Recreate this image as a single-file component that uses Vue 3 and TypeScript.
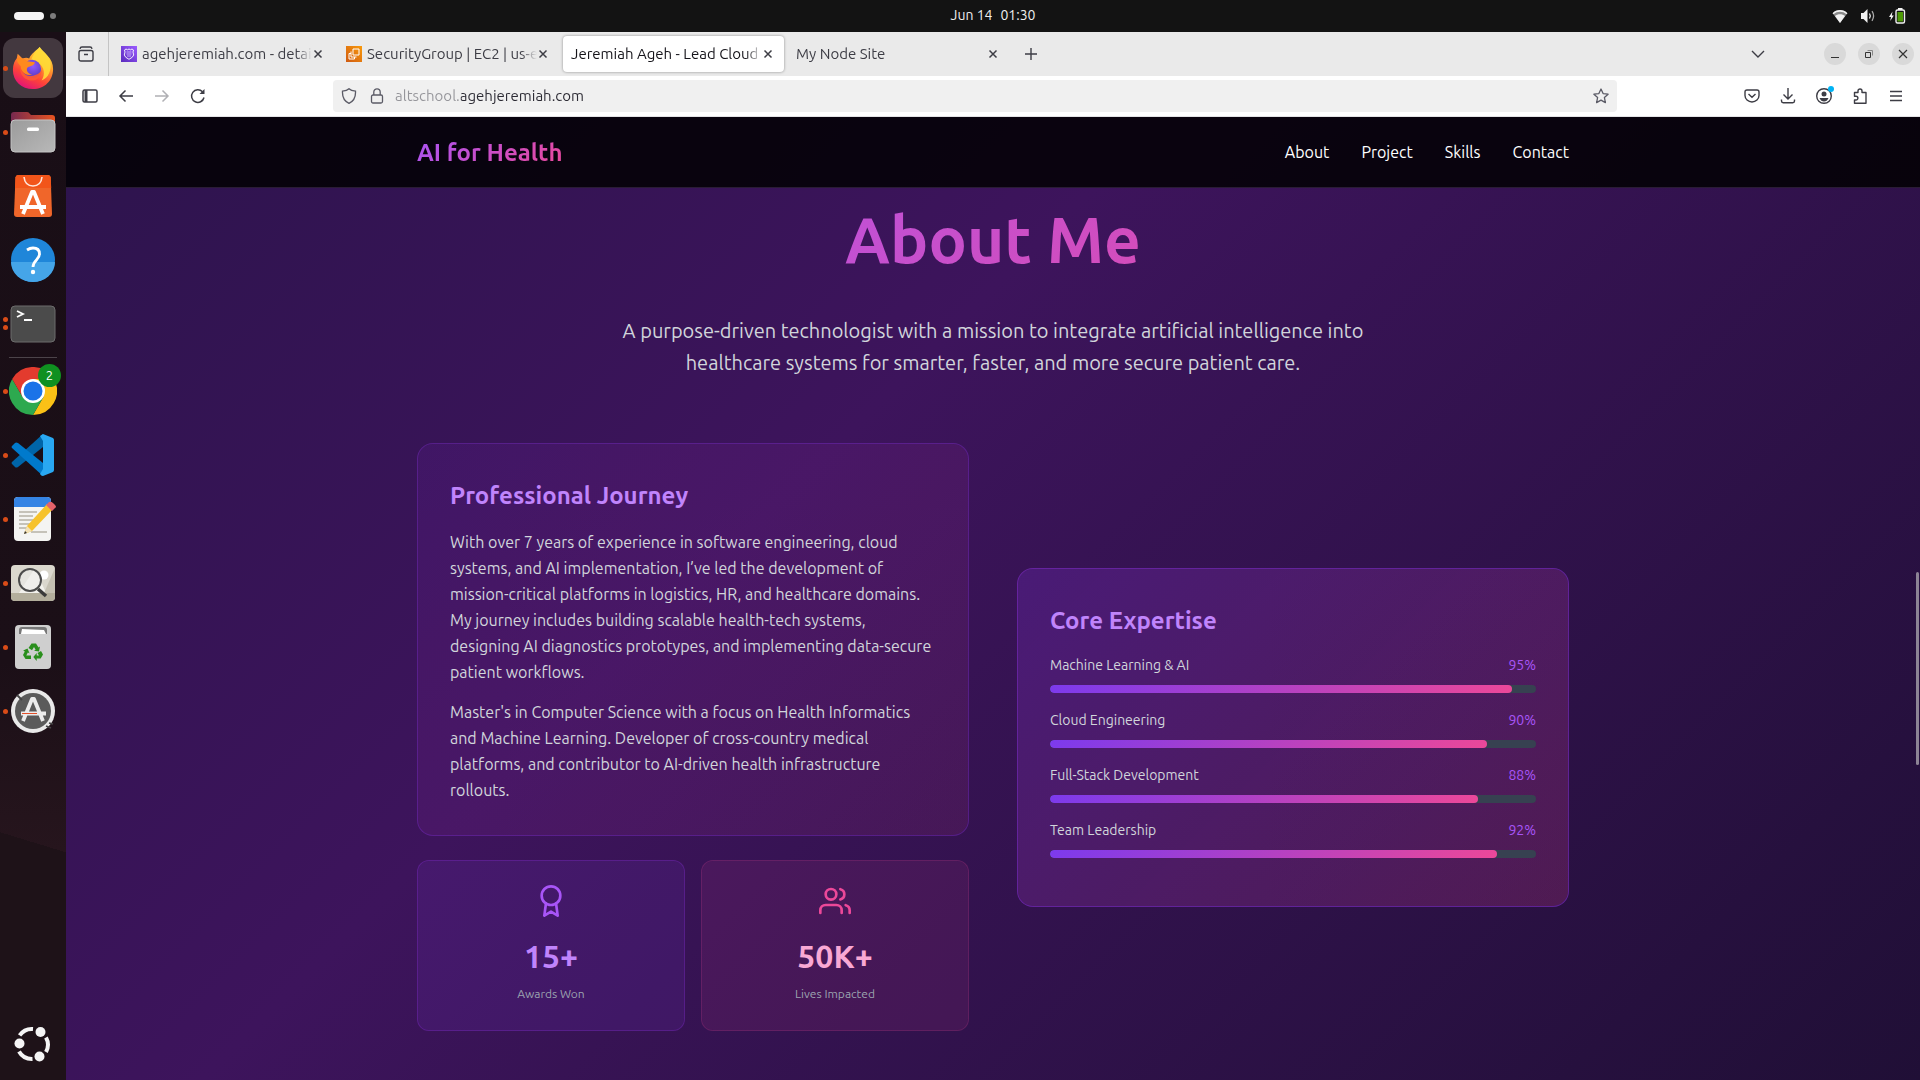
<script setup lang="ts">
interface Tab {
  title: string
  icon?: 'route' | 'ec2'
  active?: boolean
}

interface Skill {
  name: string
  level: number
}

const tabs: Tab[] = [
  { title: 'agehjeremiah.com - detail', icon: 'route' },
  { title: 'SecurityGroup | EC2 | us-e', icon: 'ec2' },
  { title: 'Jeremiah Ageh - Lead Cloud E', active: true },
  { title: 'My Node Site' },
]

const links: string[] = ['About', 'Project', 'Skills', 'Contact']

const skills: Skill[] = [
  { name: 'Machine Learning & AI', level: 95 },
  { name: 'Cloud Engineering', level: 90 },
  { name: 'Full-Stack Development', level: 88 },
  { name: 'Team Leadership', level: 92 },
]
</script>

<template>
  <div class="desktop">
    <header class="topbar">
      <div class="workspaces"><span class="pill"></span><span class="dot"></span></div>
      <time class="clock"><span>Jun 14</span><span>01:30</span></time>
      <div class="tray">
        <svg width="16" height="16" viewBox="0 0 16 16">
          <path d="M8 15 0.6 5.2C4.5 1 11.500 1 15.400 5.200Z" fill="#8a8a8a" />
          <path d="M0.600 5.200C4.500 1 11.500 1 15.400 5.200L14.500 6.300C11 3 5 3 1.500 6.300Z" fill="#f2f2f2" />
          <path d="M8 15 3 8C5.500 5.800 10.500 5.800 13 8Z" fill="#f2f2f2" />
        </svg>
        <svg width="16" height="16" viewBox="0 0 16 16">
          <path d="M1 5h2.500L7.500 1v14L3.500 11H1Z" fill="#f2f2f2" />
          <path d="M9.500 5.500q1.600 2.500 0 5" stroke="#f2f2f2" stroke-width="1.300" fill="none" />
          <path d="M12 3.200q3.200 4.800 0 9.600" stroke="#aaa" stroke-width="1.300" fill="none" />
        </svg>
        <svg width="18" height="16" viewBox="0 0 18 16">
          <path d="M4.500 3.500 1 9h2l-.8 4L5.800 7.500h-2Z" fill="#f2f2f2" />
          <rect x="8" y="2" width="8.500" height="13" rx="1.500" fill="none" stroke="#f2f2f2" stroke-width="1.400" />
          <rect x="10" y="0" width="4.500" height="2" fill="#f2f2f2" />
          <rect x="9.500" y="4" width="5.500" height="9.500" fill="#4e9a06" />
        </svg>
      </div>
    </header>

    <div class="workarea">
      <aside class="dock">
        <div class="app focused">
          <i class="runs"></i>
          <svg width="46" height="46" viewBox="0 0 46 46">
            <defs>
              <linearGradient id="fox" x1="0.800" y1="0" x2="0.300" y2="1">
                <stop offset="0" stop-color="#fff44f" />
                <stop offset="0.350" stop-color="#ffa52c" />
                <stop offset="0.700" stop-color="#ff4338" />
                <stop offset="1" stop-color="#e0127a" />
              </linearGradient>
              <radialGradient id="globe" cx="0.550" cy="0.350" r="0.600">
                <stop offset="0" stop-color="#9059ff" />
                <stop offset="1" stop-color="#5b3cc4" />
              </radialGradient>
            </defs>
            <path d="M30 1c2 3 5 5 8 9 4 4 6 9 6 14 0 12-9 21-21 21S2 37 2 25c0-6 2-10 4-12l1-5 5 5c3-1 5-1 7 0 2-5 7-8 11-12Z" fill="url(#fox)" />
            <path d="M30 1c1 5 9 7 11 15 2 9-2 18-9 20 4-6 3-14-3-18-4-2-6-2-8-2 1-7 6-11 9-15Z" fill="#ffdb37" opacity="0.900" />
            <circle cx="22" cy="24" r="9.500" fill="url(#globe)" />
            <path d="M6 13c4-1 8 0 11 3l8 1c-1 4-5 4-7 5-3 2-1 7 4 8-7 2-12-4-12-9-2-2-4-5-4-8Z" fill="#ff8a1e" />
            <path d="M10 21c0 8 8 13 16 9 3-1 5-3 6-5 1 6-5 12-12 11S8 28 10 21Z" fill="#ff5a33" opacity="0.900" />
          </svg>
        </div>
        <div class="app">
          <i class="runs"></i>
          <svg width="46" height="46" viewBox="0 0 46 46">
            <defs>
              <linearGradient id="folder" x1="0" x2="1"><stop offset="0" stop-color="#77294f" /><stop offset="1" stop-color="#e95420" /></linearGradient>
              <linearGradient id="folderFront" x1="0" x2="1" y1="0" y2="1"><stop offset="0" stop-color="#9b9b9b" /><stop offset="1" stop-color="#b8b8b8" /></linearGradient>
            </defs>
            <path d="M1 6q0-3 3-3h13q2 0 3 2l1 1h21q3 0 3 3v12H1Z" fill="url(#folder)" />
            <rect x="1" y="11" width="44" height="32" rx="4" fill="url(#folderFront)" stroke="#c4c4c4" />
            <rect x="17" y="18.500" width="12" height="3.500" rx="1.500" fill="#fff" />
          </svg>
        </div>
        <div class="app">
          <svg width="46" height="46" viewBox="0 0 46 46">
            <path d="M8 2h30q2.500 0 2.700 2.500L42 41q0 3-3 3H7q-3 0-3-3L5.500 4.500Q5.700 2 8 2Z" fill="#f0662a" />
            <path d="M8 2h30q2.500 0 2.700 2.500L41.200 15H5L5.500 4.500Q5.700 2 8 2Z" fill="#f2551a" />
            <path d="M14 4q1 9 9 9t9-9" fill="none" stroke="#fde5da" stroke-width="1.600" />
            <path d="M13 41 22 19h2l9 22M10 34h26" fill="none" stroke="#fff" stroke-width="3.800" stroke-linejoin="round" />
          </svg>
        </div>
        <div class="app">
          <svg width="46" height="46" viewBox="0 0 46 46">
            <circle cx="23" cy="23" r="22" fill="#1f86d9" />
            <path d="M1 25a22 20 0 0 0 44 0Z" fill="#45a5e8" />
            <path d="M17 13q3-2 6-2 6.500 0 6.500 6c0 6-6.500 6-6.500 13" fill="none" stroke="#fff" stroke-width="2.800" />
            <circle cx="23" cy="35" r="2.200" fill="#fff" />
          </svg>
        </div>
        <div class="app">
          <i class="runs double"></i>
          <svg width="46" height="46" viewBox="0 0 46 46">
            <rect x="1" y="5" width="44" height="36" rx="4" fill="#4b4b4b" stroke="#6c6c6c" />
            <path d="m7 10 6 3-6 3M14 19h8" fill="none" stroke="#fff" stroke-width="1.800" />
          </svg>
        </div>
        <hr class="split" />
        <div class="app">
          <i class="runs"></i>
          <svg width="48" height="48" viewBox="0 0 48 48">
            <path d="M24 12h20.800A24 24 0 0 1 24 48l10.400-18Z" fill="#fbc116" />
            <path d="M3.200 12A24 24 0 0 0 24 48l10.400-18H13.600Z" fill="#2da94f" />
            <path d="M3.200 12A24 24 0 0 1 44.800 12H24L13.600 30Z" fill="#e33b2e" />
            <circle cx="24" cy="24" r="12" fill="#fff" />
            <circle cx="24" cy="24" r="9.500" fill="#1a73e8" />
          </svg>
          <span class="badge">2</span>
        </div>
        <div class="app">
          <i class="runs"></i>
          <svg width="46" height="46" viewBox="0 0 46 46">
            <path d="M33 2 2 30q-1 1 0 2l3 3q1 1 3 0L33 15Z" fill="#0065a9" />
            <path d="M33 44 2 16q-1-1 0-2l3-3q1-1 3 0l25 20Z" fill="#007acc" />
            <path d="M33 2 43 6q1 1 1 2v30q0 1-1 2l-10 4q-2 0-3-2l3-5V9l-3-5Z" fill="#29a8f2" />
          </svg>
        </div>
        <div class="app">
          <i class="runs"></i>
          <svg width="50" height="46" viewBox="0 0 50 46">
            <rect x="6" y="1" width="37" height="44" rx="4" fill="#f4f4f2" />
            <path d="M6 11V5q0-4 4-4h29q4 0 4 4v6Z" fill="#3584e4" />
            <path d="M11 16h18M11 20h14M11 24h18M11 28h14M11 32h10M23 36h16" stroke="#b5b1a6" stroke-width="1.600" />
            <path d="m16 38 3-8L39 8l6 5-21 22Z" fill="#f6c22c" />
            <path d="m16 38 3-8 5 5Z" fill="#f3e2b8" />
            <path d="m38 9 3-3q2-1 4 1l2 2q2 2 0 3l-3 3Z" fill="#e4626b" />
            <path d="m16 38 1-3 2 2Z" fill="#333" />
          </svg>
        </div>
        <div class="app">
          <i class="runs"></i>
          <svg width="46" height="46" viewBox="0 0 46 46">
            <rect x="1" y="5" width="44" height="36" rx="4" fill="#dad7cd" />
            <path d="M9 33 25 8l11 25Z" fill="#f2f1ec" />
            <path d="M34 33 45 8v25Z" fill="#c4c0b2" />
            <path d="M1 33h44v4q0 4-4 4H5q-4 0-4-4Z" fill="#b3ae9c" />
            <circle cx="34" cy="15" r="4.500" fill="#fff" />
            <circle cx="20" cy="20" r="11" fill="#efefec" fill-opacity="0.600" stroke="#4c4c4c" stroke-width="2" />
            <path d="m28 29 8 7" stroke="#3a3a3a" stroke-width="3.500" />
          </svg>
        </div>
        <div class="app">
          <i class="runs"></i>
          <svg width="46" height="46" viewBox="0 0 46 46">
            <rect x="5" y="1" width="36" height="44" rx="4" fill="#cfcfcf" />
            <path d="M9 10V6q0-3 3-3h22q3 0 3 3v4Z" fill="#777" />
            <path d="m11 10 1-5 22 1 2 4Z" fill="#fff" />
            <g fill="#2a8f1d">
              <path d="m18.500 24 3-4.500h4.500l2.500 4 1.500-.9-1 5-5-.9 1.600-1-1.600-2.600-2 3.200Z" />
              <path d="m31 27 2 3.500-2.300 4h-4V37l-3.400-4 3.400-4v2.500H29l-1.500-2.600Z" />
              <path d="m17.500 24.500 2 4.700-1.700-.7-1.500 3H21v3.500h-5.500l-2.500-4 1.800-3.500-1.600-1Z" />
            </g>
          </svg>
        </div>
        <div class="app">
          <i class="runs"></i>
          <svg width="46" height="46" viewBox="0 0 46 46">
            <circle cx="23" cy="23" r="22" fill="#e9e9e9" />
            <circle cx="23" cy="23" r="18" fill="#5b5b5b" />
            <path d="m7 7 5 5M36 38l5 2M39 35l4 1" stroke="#444" stroke-width="1.800" />
            <path d="m13 33 9-22h2l9 22M11 25.500h25" fill="none" stroke="#ececec" stroke-width="3.800" stroke-linejoin="round" />
            <path d="M12 25.500h15" stroke="#e2502a" stroke-width="1" />
          </svg>
        </div>
        <button class="launcher" aria-label="Show apps">
          <svg width="38" height="38" viewBox="1 0 38 38">
            <g fill="none" stroke="#f5f5f5" stroke-width="4">
              <path d="M6.600 10.400A15 15 0 0 1 20 4" />
              <path d="M33 12.500a15 15 0 0 1 0 14.500" />
              <path d="M6 26.500A15 15 0 0 0 19.500 34" />
            </g>
            <g fill="#f5f5f5"><circle cx="6.500" cy="18.500" r="5" /><circle cx="27.500" cy="7" r="5" /><circle cx="26.500" cy="31.500" r="5" /></g>
          </svg>
        </button>
      </aside>

      <div class="browser">
        <div class="tabbar">
          <button class="tool recent" aria-label="Recent browsing">
            <svg width="16" height="16" viewBox="0 0 16 16" fill="none" stroke="#3d3d45" stroke-width="1.400">
              <rect x="1" y="4.500" width="14" height="10.500" rx="2" /><path d="M2 2.800q.3-1.800 2-1.800h8q1.700 0 2 1.800M6 8.500h4" />
            </svg>
          </button>
          <div class="tabs">
            <div v-for="tab in tabs" :key="tab.title" class="tab" :class="{ active: tab.active }">
              <svg v-if="tab.icon === 'route'" width="16" height="16" viewBox="0 0 16 16">
                <defs>
                  <linearGradient id="routeBg" x1="0" y1="1" x2="1" y2="0"><stop offset="0" stop-color="#5a2bbd" /><stop offset="1" stop-color="#9b5bff" /></linearGradient>
                </defs>
                <rect width="16" height="16" fill="url(#routeBg)" />
                <path d="M3.500 4 5 3l1.500.8L8 3l1.500.8L11 3l1.500 1-.5 2 .7 3q-.7 2.500-4.700 4.300Q4 11.500 3.300 9L4 6Z" fill="none" stroke="#fff" stroke-width="0.900" />
                <path d="M5.500 6h5M5.500 8h5M6 10h4" stroke="#d9c4ff" stroke-width="0.800" />
              </svg>
              <svg v-if="tab.icon === 'ec2'" width="16" height="16" viewBox="0 0 16 16">
                <defs>
                  <linearGradient id="ec2Bg" x1="0" y1="1" x2="1" y2="0"><stop offset="0" stop-color="#cf5a12" /><stop offset="1" stop-color="#f99a0c" /></linearGradient>
                </defs>
                <rect width="16" height="16" fill="url(#ec2Bg)" />
                <path d="M7 3h6v6H7ZM5 5.500v5.500h5.500M5 7.500H3V13h5.500v-2" fill="none" stroke="#fff" stroke-width="1" />
              </svg>
              <span class="title">{{ tab.title }}</span>
              <button class="close" aria-label="Close tab">
                <svg width="10" height="10" viewBox="0 0 10 10"><path d="m1.500 1.500 7 7m0-7-7 7" stroke="#3d3d45" stroke-width="1.500" /></svg>
              </button>
            </div>
            <button class="tool plus" aria-label="New tab">
              <svg width="14" height="14" viewBox="0 0 14 14"><path d="M7 1v12M1 7h12" stroke="#3d3d45" stroke-width="1.400" /></svg>
            </button>
          </div>
          <button class="tool chevron" aria-label="List all tabs">
            <svg width="14" height="14" viewBox="0 0 14 14"><path d="m1 4 6 6 6-6" fill="none" stroke="#3d3d45" stroke-width="1.400" /></svg>
          </button>
          <div class="window-buttons">
            <button aria-label="Minimize"><svg width="10" height="10" viewBox="0 0 10 10"><path d="M1 8.500h8" stroke="#333" /></svg></button>
            <button aria-label="Restore"><svg width="10" height="10" viewBox="0 0 10 10" fill="none"><path d="M1.500 3.500h5v5h-5Z" stroke="#333" /><path d="M3.500 1.500h5v5" stroke="#888" /></svg></button>
            <button aria-label="Close"><svg width="10" height="10" viewBox="0 0 10 10"><path d="m1 1 8 8m0-8-8 8" stroke="#333" stroke-width="1.200" /></svg></button>
          </div>
        </div>

        <div class="navbar">
          <div class="nav-left">
            <button class="tool" aria-label="Sidebar">
              <svg width="16" height="16" viewBox="0 0 16 16" fill="none" stroke="#3d3d45" stroke-width="1.500"><rect x="1" y="2" width="14" height="12" rx="1.500" /><path d="M4 2v12" stroke-width="3" /></svg>
            </button>
            <button class="tool" aria-label="Back">
              <svg width="16" height="16" viewBox="0 0 16 16" fill="none" stroke="#3d3d45" stroke-width="1.500"><path d="M15 8H2M7.500 2.500 2 8l5.500 5.500" /></svg>
            </button>
            <button class="tool" aria-label="Forward" disabled>
              <svg width="16" height="16" viewBox="0 0 16 16" fill="none" stroke="#b0b0b4" stroke-width="1.500"><path d="M1 8h13M8.500 2.500 14 8l-5.500 5.500" /></svg>
            </button>
            <button class="tool" aria-label="Reload">
              <svg width="16" height="16" viewBox="0 0 16 16" fill="none" stroke="#3d3d45" stroke-width="1.500"><path d="M14 9.500A6.300 6.300 0 1 1 12.500 3.800" /><path d="M14.500 1v5H9.500Z" fill="#3d3d45" stroke="none" /></svg>
            </button>
          </div>
          <div class="urlbar">
            <svg width="16" height="16" viewBox="0 0 16 16" fill="none" stroke="#5b5b66" stroke-width="1.300"><path d="M8 .8C6.500 2.300 4 3 1.500 3.200 1.200 8.500 3 13 8 15.300c5-2.300 6.800-6.800 6.500-12.100C12 3 9.500 2.300 8 .8Z" /></svg>
            <svg width="16" height="16" viewBox="0 0 16 16" fill="none" stroke="#5b5b66" stroke-width="1.300"><rect x="2.500" y="7" width="11" height="8" rx="1.500" /><path d="M4.800 7V4a3.200 3.200 0 0 1 6.400 0v3" /></svg>
            <input class="url" type="text" aria-label="Address" value="altschool.agehjeremiah.com" />
            <button class="tool star" aria-label="Bookmark">
              <svg width="16" height="16" viewBox="0 0 16 16" fill="none" stroke="#5b5b66" stroke-width="1.300" stroke-linejoin="round"><path d="m8 1 2.100 4.600 5 .6-3.700 3.400 1 5L8 12.100 3.600 14.600l1-5L.9 6.200l5-.6Z" /></svg>
            </button>
          </div>
          <div class="nav-right">
            <button class="tool" aria-label="Pocket">
              <svg width="16" height="16" viewBox="0 0 16 16" fill="none" stroke="#3d3d45" stroke-width="1.400"><path d="M3 2h10q2 0 2 2v3.500a7 6.500 0 0 1-14 0V4q0-2 2-2ZM4.500 6 8 9.300 11.500 6" /></svg>
            </button>
            <button class="tool" aria-label="Downloads">
              <svg width="16" height="16" viewBox="0 0 16 16" fill="none" stroke="#3d3d45" stroke-width="1.400"><path d="M8 0v10.500M3.500 6.500 8 11l4.500-4.500M1.500 11.500v1.500q0 1.700 1.700 1.700h9.600q1.700 0 1.700-1.700v-1.500" /></svg>
            </button>
            <button class="tool" aria-label="Account">
              <svg class="account" width="16" height="16" viewBox="1 3 16 16"><circle cx="9" cy="11" r="7.300" fill="none" stroke="#3d3d45" stroke-width="1.400" /><circle cx="9" cy="9" r="2.500" fill="#3d3d45" /><path d="M4.500 13h9q-1.500 3.500-4.500 3.500T4.500 13Z" fill="#3d3d45" /><circle cx="16" cy="4" r="3" fill="#00b3f4" /></svg>
            </button>
            <button class="tool" aria-label="Extensions">
              <svg width="16" height="16" viewBox="0 0 16 16" fill="none" stroke="#3d3d45" stroke-width="1.400" stroke-linejoin="round"><path d="M6 4.500V3a2 2 0 0 1 4 0v1.500h4v10.700H2.500V12H4a1.800 1.800 0 0 0 0-3.800H2.500V4.500Z" /></svg>
            </button>
            <button class="tool" aria-label="Menu">
              <svg width="16" height="16" viewBox="0 0 16 16"><path d="M2 3.500h12M2 8h12M2 12.500h12" stroke="#3d3d45" stroke-width="1.400" /></svg>
            </button>
          </div>
        </div>

        <div class="page">
          <header class="site-header">
            <div class="wrap site-nav">
              <div class="brand">AI for Health</div>
              <nav>
                <a v-for="link in links" :key="link" :href="'#' + link.toLowerCase()">{{ link }}</a>
              </nav>
            </div>
          </header>

          <main id="about" class="wrap about">
            <h1>About Me</h1>
            <p class="intro">A purpose-driven technologist with a mission to integrate artificial intelligence into healthcare systems for smarter, faster, and more secure patient care.</p>

            <div class="columns">
              <div class="left">
                <section class="card journey">
                  <h2>Professional Journey</h2>
                  <p>With over 7 years of experience in software engineering, cloud systems, and AI implementation, I’ve led the development of mission-critical platforms in logistics, HR, and healthcare domains. My journey includes building scalable health-tech systems, designing AI diagnostics prototypes, and implementing data-secure patient workflows.</p>
                  <p>Master's in Computer Science with a focus on Health Informatics and Machine Learning. Developer of cross-country medical platforms, and contributor to AI-driven health infrastructure rollouts.</p>
                </section>
                <div class="stats">
                  <section class="stat violet">
                    <svg width="32" height="32" viewBox="0 0 24 24" fill="none" stroke="#a855f7" stroke-width="2" stroke-linecap="round" stroke-linejoin="round"><circle cx="12" cy="8" r="7" /><polyline points="8.21 13.89 7 23 12 20 17 23 15.79 13.88" /></svg>
                    <strong>15+</strong>
                    <span>Awards Won</span>
                  </section>
                  <section class="stat pink">
                    <svg width="32" height="32" viewBox="0 0 24 24" fill="none" stroke="#ec4899" stroke-width="2" stroke-linecap="round" stroke-linejoin="round"><path d="M17 21v-2a4 4 0 0 0-4-4H5a4 4 0 0 0-4 4v2" /><circle cx="9" cy="7" r="4" /><path d="M23 21v-2a4 4 0 0 0-3-3.870M16 3.130a4 4 0 0 1 0 7.750" /></svg>
                    <strong>50K+</strong>
                    <span>Lives Impacted</span>
                  </section>
                </div>
              </div>

              <section class="card expertise">
                <h2>Core Expertise</h2>
                <div v-for="skill in skills" :key="skill.name" class="skill">
                  <div class="skill-head"><span>{{ skill.name }}</span><span class="level">{{ skill.level }}%</span></div>
                  <div class="track" role="progressbar" :aria-valuenow="skill.level" :aria-label="skill.name">
                    <div class="fill" :style="{ width: skill.level + '%' }"></div>
                  </div>
                </div>
              </section>
            </div>
          </main>
          <div class="scroll-thumb"></div>
        </div>
      </div>
    </div>
  </div>
</template>

<style>
body {
  margin: 0;
  background: #131313;
}
</style>

<style scoped>
* {
  box-sizing: border-box;
}
.desktop {
  display: flex;
  flex-direction: column;
  min-height: 100vh;
  font-family: Ubuntu, "Open Sans", "Noto Sans", sans-serif;
  color: #fff;
}
svg {
  display: block;
  flex: none;
}
button {
  border: 0;
  padding: 0;
  background: none;
  display: grid;
  place-items: center;
}

/* System bar: the clock is centred over the area right of the dock */
.topbar {
  display: grid;
  grid-template-columns: 66px 1fr auto 1fr;
  align-items: center;
  height: 32px;
  background: #131313;
}
.workspaces {
  display: flex;
  align-items: center;
  gap: 6px;
  padding-left: 14px;
}
.pill {
  width: 30px;
  height: 8px;
  border-radius: 4px;
  background: #f5f5f5;
}
.dot {
  width: 6px;
  height: 6px;
  border-radius: 50%;
  background: #7d7d7d;
}
.clock {
  grid-column: 3;
  display: flex;
  gap: 8px;
  padding-bottom: 2px;
  font-size: 14px;
  line-height: 20px;
  color: #f0f0f0;
}
.tray {
  display: flex;
  justify-content: flex-end;
  align-items: center;
  gap: 12px;
  padding-right: 14px;
}

.workarea {
  flex: 1;
  display: flex;
}

/* Dock */
.dock {
  flex: none;
  display: flex;
  flex-direction: column;
  width: 66px;
  padding: 4px 0;
  background:
    linear-gradient(197deg, transparent 76.8%, #1e1218 76.8%),
    linear-gradient(#190e16, #1b0f17 60%, #26151d 78%);
}
.app {
  position: relative;
  display: grid;
  place-items: center;
  height: 64px;
}
.focused::before {
  content: "";
  position: absolute;
  inset: 2px 3px;
  border-radius: 12px;
  background: #43383f;
}
.app svg {
  position: relative;
}
.focused svg {
  width: 44px;
}
.runs {
  position: absolute;
  left: 3px;
  width: 5px;
  height: 5px;
  border-radius: 50%;
  background: #d94c18;
  z-index: 1;
}
.double {
  top: 25px;
  box-shadow: 0 8px #d94c18;
}
.split {
  width: 48px;
  height: 1px;
  margin: 1px auto;
  border: 0;
  background: #4c444a;
}
.badge {
  position: absolute;
  top: 5px;
  right: 5px;
  width: 23px;
  height: 23px;
  border-radius: 50%;
  background: #0f9020;
  font-size: 13px;
  line-height: 23px;
  text-align: center;
}
.launcher {
  height: 64px;
  margin-top: auto;
}

/* Browser */
.browser {
  flex: 1;
  min-width: 0;
  display: flex;
  flex-direction: column;
}
.tabbar {
  display: flex;
  align-items: center;
  height: 44px;
  background: #eaeaea;
  color: #3d3d45;
}
.recent {
  width: 43px;
  height: 44px;
  padding-right: 2px;
  border-right: 1px solid #c4c4c4;
}
.tabs {
  flex: 1;
  display: flex;
  align-items: center;
  padding-left: 2px;
}
.tab {
  display: flex;
  align-items: center;
  width: 221px;
  height: 36px;
  margin: 0 2px;
  padding: 0 10px 0 8px;
  border-radius: 4px;
  font-size: 15px;
  line-height: 20px;
}
.tab svg + .title {
  margin-left: 5px;
}
.active {
  background: #fff;
  color: #15141a;
  box-shadow: 0 0 3px rgba(0, 0, 0, 0.4);
}
.title {
  flex: 1;
  min-width: 0;
  overflow: hidden;
  white-space: nowrap;
  mask-image: linear-gradient(to left, transparent, #000 16px);
}
.close {
  flex: none;
  width: 12px;
  height: 20px;
}
.plus {
  width: 40px;
  height: 36px;
}
.chevron {
  width: 40px;
  height: 36px;
}
.window-buttons {
  display: flex;
  gap: 12px;
  padding: 0 6px 0 46px;
}
.window-buttons button {
  width: 22px;
  height: 22px;
  border-radius: 50%;
  background: #d9d9d9;
}
.navbar {
  display: grid;
  grid-template-columns: 267px 1fr 303px;
  align-items: center;
  height: 41px;
  border-bottom: 1px solid #e4e4e6;
  background: #fff;
}
.nav-left {
  display: flex;
  gap: 20px;
  padding-left: 16px;
}
.urlbar {
  display: flex;
  align-items: center;
  gap: 12px;
  height: 32px;
  padding: 0 8px;
  border-radius: 4px;
  background: #f0f0f0;
}
.url {
  flex: 1;
  min-width: 0;
  border: 0;
  padding: 0;
  margin-left: -2px;
  outline: 0;
  font: 15px/20px Ubuntu, "Open Sans", "Noto Sans", sans-serif;
  color: transparent;
  background: linear-gradient(to right, #95959a 66px, #2b2a33 66px);
  background-clip: text;
}
.nav-right {
  display: flex;
  justify-content: flex-end;
  align-items: center;
  gap: 20px;
  padding-right: 16px;
}
.account {
  overflow: visible;
}

/* Site */
.page {
  position: relative;
  flex: 1;
  background: linear-gradient(135deg, #2d144d, #3d145c 39%, #200f36);
}
.scroll-thumb {
  position: absolute;
  right: 1px;
  top: 47.3%;
  width: 3px;
  height: 20%;
  border-radius: 2px;
  background: #8d8495;
}
.wrap {
  max-width: 1200px;
  margin: 0 auto;
  padding: 0 24px;
}
.site-header {
  border-bottom: 1px solid #2a1c35;
  background: rgba(0, 0, 0, 0.83);
}
.site-nav {
  display: flex;
  align-items: center;
  justify-content: space-between;
  height: 70px;
}
.brand {
  padding-top: 2px;
  font-size: 24px;
  line-height: 38px;
  font-weight: 600;
  color: transparent;
  background: linear-gradient(135deg, #a855f7, #ec4899);
  background-clip: text;
}
nav {
  display: flex;
  gap: 32px;
}
nav a {
  color: #fff;
  font-size: 16px;
  line-height: 26px;
  text-decoration: none;
}
.about {
  padding-bottom: 48px;
}
h1 {
  margin: 0 0 25px;
  font-size: 64px;
  line-height: 102px;
  font-weight: 600;
  text-align: center;
  color: transparent;
  background: linear-gradient(135deg, #a855f7, #ec4899);
  background-clip: text;
}
.intro {
  max-width: 768px;
  margin: 0 auto 64px;
  font-size: 20px;
  line-height: 32px;
  text-align: center;
  color: #d1d5db;
}
.columns {
  display: grid;
  grid-template-columns: 1fr 1fr;
  align-items: center;
  gap: 48px;
}
.left {
  display: grid;
  gap: 24px;
}
.card {
  padding: 32px;
  border: 1px solid rgba(147, 51, 234, 0.35);
  border-radius: 16px;
  background: linear-gradient(135deg, rgba(147, 51, 234, 0.1), rgba(236, 72, 153, 0.1)) padding-box;
}
h2 {
  margin: 0 0 13px;
  font-size: 24px;
  line-height: 40px;
  font-weight: 600;
  color: #c084fc;
}
.journey p {
  margin: 0 0 14px;
  font-size: 16px;
  line-height: 26px;
  color: #d1d5db;
}
.journey p:last-child {
  margin: 0;
}
.stats {
  display: grid;
  grid-template-columns: 1fr 1fr;
  gap: 16px;
}
.stat {
  display: flex;
  flex-direction: column;
  align-items: center;
  padding: 24px;
  border: 1px solid rgba(147, 51, 234, 0.35);
  border-radius: 12px;
  background: rgba(132, 60, 225, 0.13) padding-box;
}
.stat strong {
  margin-top: 13px;
  font-size: 32px;
  line-height: 52px;
  font-weight: 600;
  color: #c084fc;
}
.stat span {
  font-size: 12px;
  line-height: 24px;
  color: #9ca3af;
}
.stat.pink {
  border-color: rgba(236, 72, 153, 0.25);
  background: rgba(236, 72, 153, 0.1) padding-box;
}
.pink strong {
  color: #f9a8d4;
}
.card.expertise {
  border-color: rgba(147, 51, 234, 0.5);
  background: linear-gradient(135deg, rgba(139, 58, 237, 0.22), rgba(236, 72, 153, 0.2)) padding-box;
}
.skill {
  margin-bottom: 16px;
}
.skill-head {
  display: flex;
  justify-content: space-between;
  margin-bottom: 8px;
  font-size: 14px;
  line-height: 23px;
  color: #d1d5db;
}
.level {
  color: #a855f7;
}
.track {
  height: 8px;
  border-radius: 4px;
  overflow: hidden;
  background: #374151;
}
.fill {
  height: 8px;
  border-radius: 4px;
  background: linear-gradient(135deg, #7c3aed, #ec4899);
}
</style>
